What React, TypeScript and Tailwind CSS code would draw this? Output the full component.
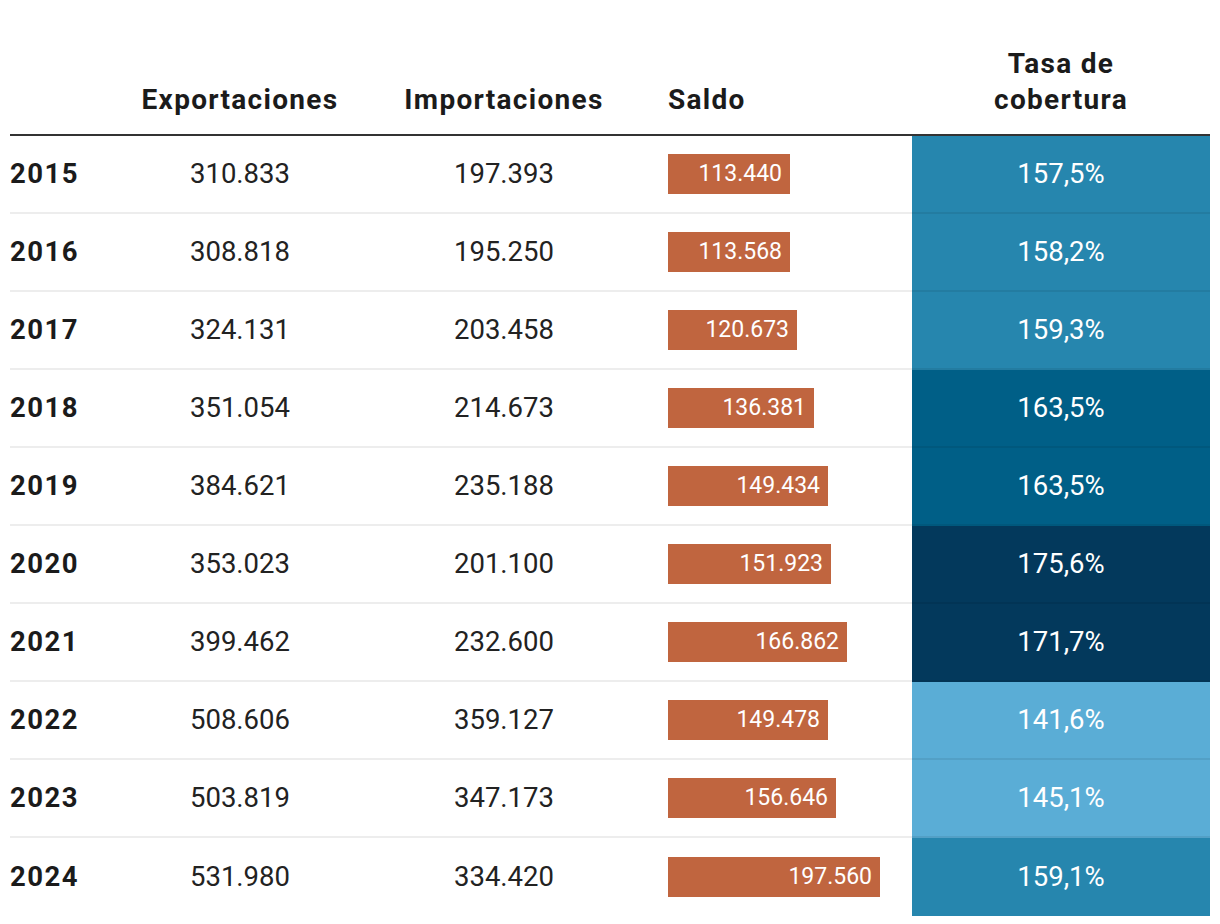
import React from "react";

type Row = { y: string; ex: string; im: string; s: string; sv: number; t: string; bg: string };

const rows: Row[] = [
  { y: "2015", ex: "310.833", im: "197.393", s: "113.440", sv: 113.44, t: "157,5%", bg: "bg-[#2686ae]" },
  { y: "2016", ex: "308.818", im: "195.250", s: "113.568", sv: 113.568, t: "158,2%", bg: "bg-[#2686ae]" },
  { y: "2017", ex: "324.131", im: "203.458", s: "120.673", sv: 120.673, t: "159,3%", bg: "bg-[#2686ae]" },
  { y: "2018", ex: "351.054", im: "214.673", s: "136.381", sv: 136.381, t: "163,5%", bg: "bg-[#005f87]" },
  { y: "2019", ex: "384.621", im: "235.188", s: "149.434", sv: 149.434, t: "163,5%", bg: "bg-[#005f87]" },
  { y: "2020", ex: "353.023", im: "201.100", s: "151.923", sv: 151.923, t: "175,6%", bg: "bg-[#03395c]" },
  { y: "2021", ex: "399.462", im: "232.600", s: "166.862", sv: 166.862, t: "171,7%", bg: "bg-[#03395c]" },
  { y: "2022", ex: "508.606", im: "359.127", s: "149.478", sv: 149.478, t: "141,6%", bg: "bg-[#5aadd6]" },
  { y: "2023", ex: "503.819", im: "347.173", s: "156.646", sv: 156.646, t: "145,1%", bg: "bg-[#5aadd6]" },
  { y: "2024", ex: "531.980", im: "334.420", s: "197.560", sv: 197.56, t: "159,1%", bg: "bg-[#2686ae]" },
];

const grid = "grid grid-cols-[120px_220px_308px_254px_298px]";

export default function App() {
  return (
    <div
      className="w-[1220px] h-[924px] bg-white px-[10px] text-[#222]"
      style={{ fontFamily: "Roboto, 'Liberation Sans', sans-serif" }}
    >
      <div className={`${grid} h-[136px] border-b-2 border-[#333] items-end text-[28px] font-bold tracking-[1.3px] leading-[36px] text-[#1b1b1b]`}>
        <div />
        <div className="text-center pb-[16px]">Exportaciones</div>
        <div className="text-center pb-[16px]">Importaciones</div>
        <div className="pl-[10px] pb-[16px]">Saldo</div>
        <div className="text-center pb-[16px]">
          Tasa de
          <br />
          cobertura
        </div>
      </div>
      {rows.map((r, i) => {
        const b = i < rows.length - 1 ? "border-b-2 border-black/[0.07]" : "";
        return (
          <div key={r.y} className={`${grid} h-[78px] text-[27.5px]`}>
            <div className={`${b} flex items-center font-bold tracking-[1.5px] text-[#1b1b1b]`}>{r.y}</div>
            <div className={`${b} flex items-center justify-center`}>{r.ex}</div>
            <div className={`${b} flex items-center justify-center`}>{r.im}</div>
            <div className={`${b} flex items-center pl-[10px]`}>
              <div
                className="h-[40px] bg-[#c0653f] text-white text-[23px] flex items-center justify-end pr-[8px]"
                style={{ width: `${Math.round(r.sv * 1.0731)}px` }}
              >
                {r.s}
              </div>
            </div>
            <div className={`${b} ${r.bg} flex items-center justify-center text-white`}>{r.t}</div>
          </div>
        );
      })}
    </div>
  );
}
